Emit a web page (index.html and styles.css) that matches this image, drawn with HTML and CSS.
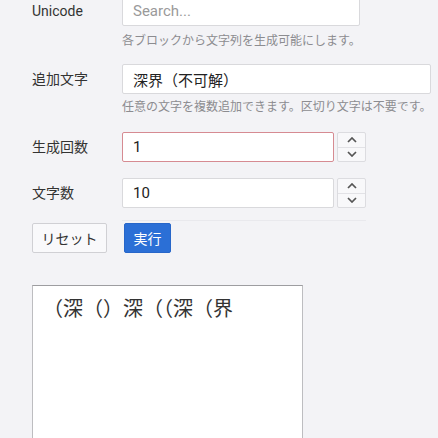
FILE: index.html
```html
<!DOCTYPE html>
<html lang="ja">
<head>
<meta charset="utf-8">
<title>文字列生成</title>
<link rel="stylesheet" href="styles.css">
</head>
<body>
<div class="page">
  <div class="row row-first">
    <label class="label">Unicode</label>
    <div class="field">
      <input class="input w-unicode" type="text" placeholder="Search...">
      <div class="hint hint-first">各ブロックから文字列を生成可能にします。</div>
    </div>
  </div>
  <div class="row">
    <label class="label">追加文字</label>
    <div class="field">
      <input class="input w-text" type="text" value="深界（不可解）">
      <div class="hint">任意の文字を複数追加できます。区切り文字は不要です。</div>
    </div>
  </div>
  <div class="row">
    <label class="label">生成回数</label>
    <div class="field num">
      <input class="input w-num invalid" type="text" value="1">
      <div class="spin">
        <span class="spin-btn"><svg width="10" height="6" viewBox="0 0 10 6"><polyline points="1,5 5,1 9,5" fill="none" stroke="#555" stroke-width="1.7"/></svg></span>
        <span class="spin-btn"><svg width="10" height="6" viewBox="0 0 10 6"><polyline points="1,1 5,5 9,1" fill="none" stroke="#555" stroke-width="1.7"/></svg></span>
      </div>
    </div>
  </div>
  <div class="row">
    <label class="label">文字数</label>
    <div class="field num">
      <input class="input w-num" type="text" value="10">
      <div class="spin">
        <span class="spin-btn"><svg width="10" height="6" viewBox="0 0 10 6"><polyline points="1,5 5,1 9,5" fill="none" stroke="#555" stroke-width="1.7"/></svg></span>
        <span class="spin-btn"><svg width="10" height="6" viewBox="0 0 10 6"><polyline points="1,1 5,5 9,1" fill="none" stroke="#555" stroke-width="1.7"/></svg></span>
      </div>
    </div>
  </div>
  <div class="divider"></div>
  <div class="buttons">
    <button class="btn reset" type="button">リセット</button>
    <button class="btn run" type="button">実行</button>
  </div>
  <textarea class="output" readonly>（深（）深（（深（界</textarea>
</div>
</body>
</html>
```

FILE: styles.css
```css
html, body {
  margin: 0;
  background: #f3f3f6;
}
body {
  font-family: Roboto, "Noto Sans CJK JP", sans-serif;
  color: #333;
  overflow: hidden;
}
.page {
  margin-top: -4px;
  padding-left: 32px;
}
.row {
  display: grid;
  grid-template-columns: 90px auto;
  align-items: start;
  margin-bottom: 16px;
}
.row-first {
  margin-bottom: 14px;
}
.label {
  font-size: 14px;
  line-height: 30px;
  color: #333;
}
.input {
  box-sizing: border-box;
  display: block;
  height: 30px;
  margin: 0;
  border: 1px solid #d9d9dc;
  border-radius: 2px;
  background: #fff;
  padding: 0 10px;
  font-family: Roboto, "Noto Sans CJK JP", sans-serif;
  font-size: 15px;
  color: #222;
  outline: none;
}
.input::placeholder {
  color: #9a9a9a;
}
.w-unicode { width: 238px; }
.w-text { width: 309px; }
.w-num { width: 212px; }
.invalid { border-color: #d68b92; }
.hint {
  margin-top: 4px;
  font-size: 12px;
  line-height: 18px;
  color: #8c8c90;
  white-space: nowrap;
}
.hint-first {
  margin-top: 6px;
}
.num {
  display: flex;
  gap: 3px;
}
.spin {
  box-sizing: border-box;
  width: 29px;
  height: 30px;
  border: 1px solid #dcdce0;
  border-radius: 2px;
  background: #f8f8fa;
  display: flex;
  flex-direction: column;
}
.spin-btn {
  flex: 1;
  display: flex;
  align-items: center;
  justify-content: center;
}
.spin-btn + .spin-btn {
  border-top: 1px solid #e2e2e6;
}
.divider {
  margin: -4px 0 2px 90px;
  width: 244px;
  height: 1px;
  background: #e9e9ed;
}
.buttons {
  display: flex;
  gap: 17px;
}
.btn {
  box-sizing: border-box;
  height: 30px;
  margin: 0;
  padding: 0;
  border-radius: 2px;
  font-family: Roboto, "Noto Sans CJK JP", sans-serif;
  font-size: 14px;
}
.reset {
  width: 75px;
  background: #f9f9fb;
  border: 1px solid #d0d0d4;
  color: #333;
}
.run {
  width: 47px;
  background: #2b6fd6;
  border: 1px solid #2766c9;
  color: #fff;
}
.output {
  display: block;
  box-sizing: border-box;
  margin-top: 32px;
  width: 271px;
  height: 200px;
  padding: 7px 10px;
  border: 1px solid #bdbdc0;
  border-top-color: #9d9da0;
  border-radius: 0;
  background: #fff;
  font-family: "Noto Sans CJK JP", sans-serif;
  font-size: 20px;
  color: #333;
  resize: none;
  outline: none;
}
```
